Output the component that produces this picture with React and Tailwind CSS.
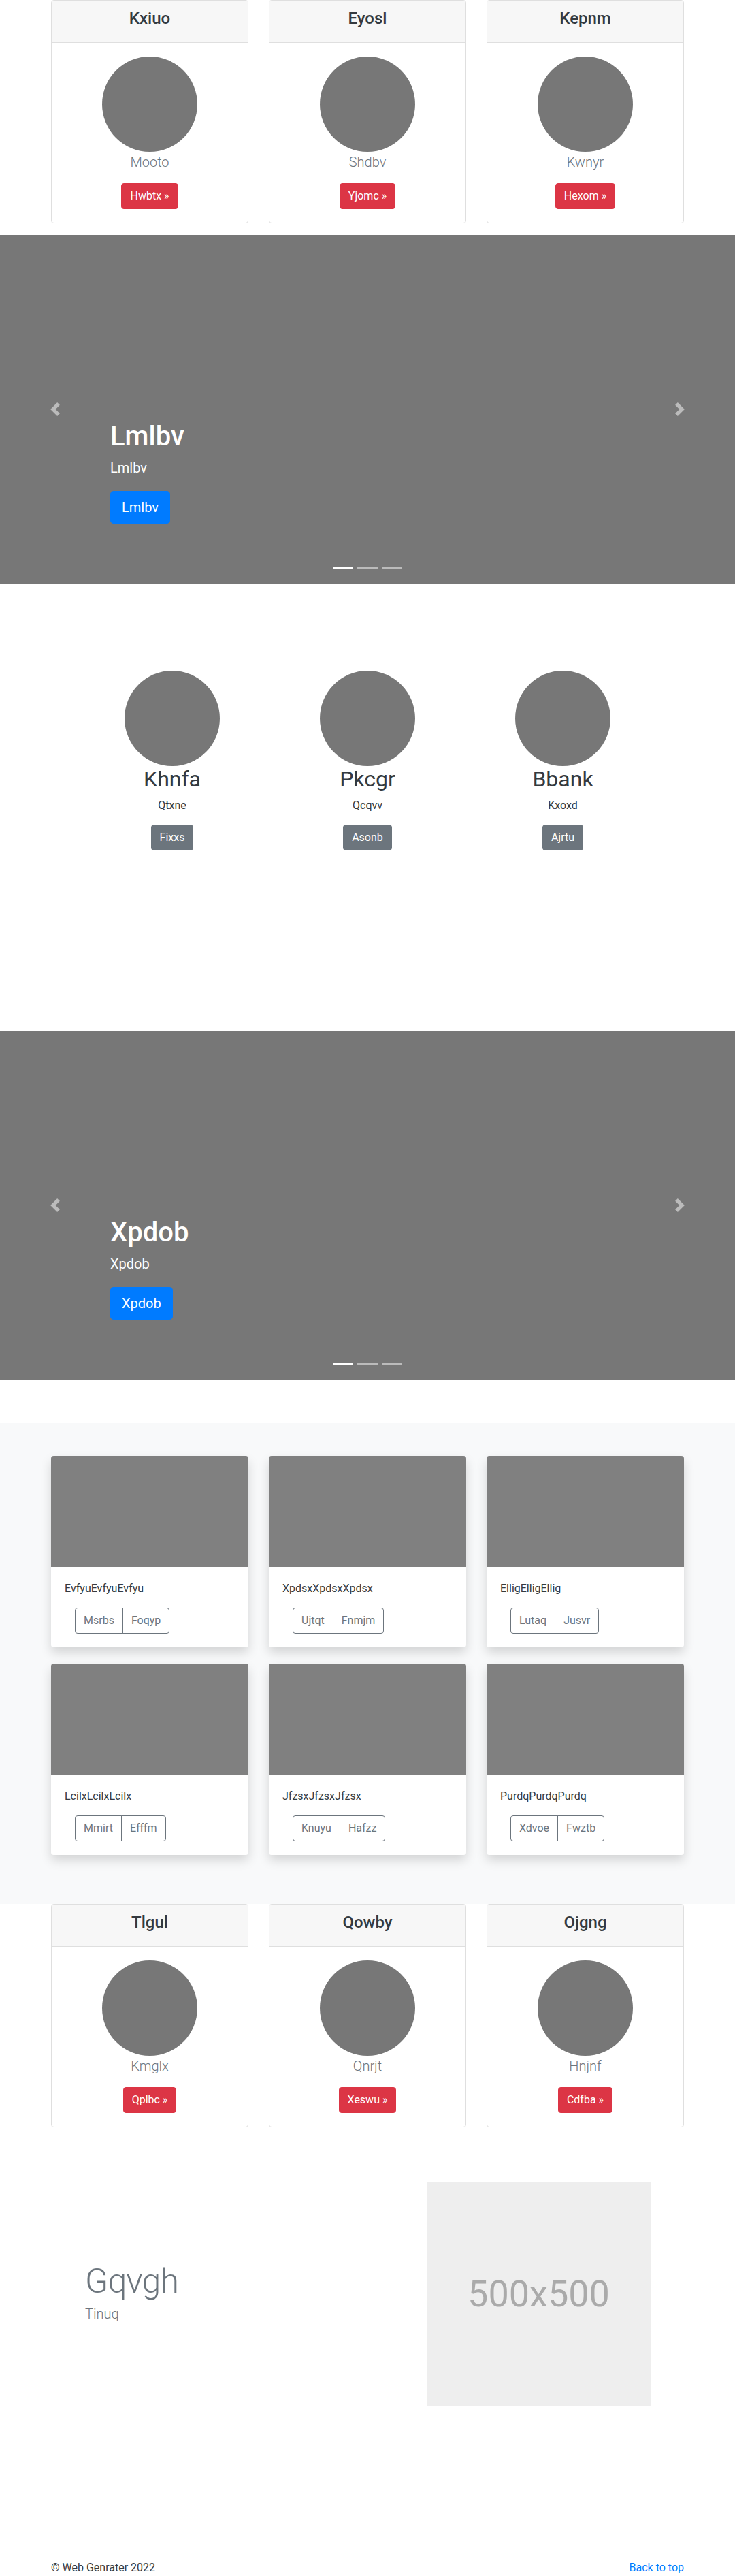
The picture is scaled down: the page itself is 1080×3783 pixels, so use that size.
import React from "react";

const FONT = "font-['Segoe_UI',Roboto,'Helvetica_Neue',Arial,sans-serif]";

const pricingTop = [
  { title: "Kxiuo", name: "Mooto", cta: "Hwbtx" },
  { title: "Eyosl", name: "Shdbv", cta: "Yjomc" },
  { title: "Kepnm", name: "Kwnyr", cta: "Hexom" },
];

const pricingBottom = [
  { title: "Tlgul", name: "Kmglx", cta: "Qplbc" },
  { title: "Qowby", name: "Qnrjt", cta: "Xeswu" },
  { title: "Ojgng", name: "Hnjnf", cta: "Cdfba" },
];

const marketing = [
  { title: "Khnfa", text: "Qtxne", cta: "Fixxs" },
  { title: "Pkcgr", text: "Qcqvv", cta: "Asonb" },
  { title: "Bbank", text: "Kxoxd", cta: "Ajrtu" },
];

const album = [
  { text: "EvfyuEvfyuEvfyu", a: "Msrbs", b: "Foqyp" },
  { text: "XpdsxXpdsxXpdsx", a: "Ujtqt", b: "Fnmjm" },
  { text: "ElligElligEllig", a: "Lutaq", b: "Jusvr" },
  { text: "LcilxLcilxLcilx", a: "Mmirt", b: "Efffm" },
  { text: "JfzsxJfzsxJfzsx", a: "Knuyu", b: "Hafzz" },
  { text: "PurdqPurdqPurdq", a: "Xdvoe", b: "Fwztb" },
];

function PricingRow({ items }) {
  return (
    <div className="w-[960px] mx-auto px-[15px] grid grid-cols-3 gap-x-[30px]">
      {items.map((it) => (
        <div
          key={it.title}
          className="border border-[#dfdfdf] rounded bg-white text-center overflow-hidden"
        >
          <div className="bg-[#f7f7f7] border-b border-[#dfdfdf] px-5 pt-3 pb-3">
            <h4 className="text-2xl leading-[1.2] font-medium text-[#343a40] mb-2">
              {it.title}
            </h4>
          </div>
          <div className="p-5 flex flex-col items-center">
            <div className="w-[140px] h-[140px] rounded-full bg-[#777]" />
            <p className="text-xl leading-[1.5] font-light text-[#6c757d] mb-4">
              {it.name}
            </p>
            <a className="inline-block bg-[#dc3545] border border-[#dc3545] text-white text-base leading-6 px-3 py-1.5 rounded">
              {it.cta} »
            </a>
          </div>
        </div>
      ))}
    </div>
  );
}

function Chevron({ dir }) {
  const d =
    dir === "prev"
      ? "M5.25 0l-4 4 4 4 1.5-1.5L4.25 4l2.5-2.5L5.25 0z"
      : "M2.75 0l-1.5 1.5L3.75 4l-2.5 2.5L2.75 8l4-4-4-4z";
  return (
    <svg viewBox="0 0 8 8" className="w-5 h-5" fill="#fff">
      <path d={d} />
    </svg>
  );
}

function Carousel({ label }) {
  return (
    <div className="relative h-[512px] bg-[#777] overflow-hidden">
      <div className="absolute left-0 top-0 bottom-0 w-[15%] flex items-center justify-center opacity-50">
        <Chevron dir="prev" />
      </div>
      <div className="absolute right-0 top-0 bottom-0 w-[15%] flex items-center justify-center opacity-50">
        <Chevron dir="next" />
      </div>
      <div className="absolute left-[15%] right-[15%] bottom-12 py-5 text-white">
        <h1 className="text-[40px] leading-[1.2] font-medium mb-2">{label}</h1>
        <p className="text-xl leading-[1.4] mb-5">{label}</p>
        <p className="mb-5">
          <a className="inline-block bg-[#007bff] border border-[#007bff] text-white text-xl leading-[1.5] px-4 py-2 rounded-[0.3rem]">
            {label}
          </a>
        </p>
      </div>
      <div className="absolute left-0 right-0 bottom-[22px] flex justify-center gap-[6px]">
        <span className="w-[30px] h-[3px] bg-white" />
        <span className="w-[30px] h-[3px] bg-white opacity-50" />
        <span className="w-[30px] h-[3px] bg-white opacity-50" />
      </div>
    </div>
  );
}

export default function App() {
  return (
    <div className={`${FONT} bg-white text-[#212529] text-base`}>
      {/* top pricing cards */}
      <PricingRow items={pricingTop} />

      <div className="mt-[17px] mb-16">
        <Carousel label="Lmlbv" />
      </div>

      {/* marketing */}
      <div className="w-[861px] mx-auto pt-16 grid grid-cols-3 text-center">
        {marketing.map((m) => (
          <div key={m.title} className="flex flex-col items-center">
            <div className="w-[140px] h-[140px] rounded-full bg-[#777]" />
            <h2 className="text-[32px] leading-[1.2] font-normal text-[#343a40] mb-2">
              {m.title}
            </h2>
            <p className="leading-6 mb-4 text-[#343a40]">{m.text}</p>
            <a className="inline-block bg-[#6c757d] border border-[#6c757d] text-white leading-6 px-3 py-1.5 rounded">
              {m.cta}
            </a>
          </div>
        ))}
      </div>

      <hr className="mt-[184px] border-0 border-t border-[#e6e6e6]" />

      <div className="mt-20 mb-16">
        <Carousel label="Xpdob" />
      </div>

      {/* album */}
      <div className="bg-[#f8f9fa] pt-12 pb-[72px]">
        <div className="w-[960px] mx-auto px-[15px] grid grid-cols-3 gap-x-[30px] gap-y-6">
          {album.map((c) => (
            <div
              key={c.text}
              className="bg-white rounded overflow-hidden shadow-[0_8px_16px_rgba(0,0,0,0.15)]"
            >
              <div className="h-[163px] bg-[#808080]" />
              <div className="p-5">
                <p className="leading-6 mb-4 text-[#343a40]">{c.text}</p>
                <div className="ml-[15px] inline-flex">
                  <a className="border border-[#6c757d] text-[#6c757d] leading-6 px-3 py-1.5 rounded-l">
                    {c.a}
                  </a>
                  <a className="-ml-px border border-[#6c757d] text-[#6c757d] leading-6 px-3 py-1.5 rounded-r">
                    {c.b}
                  </a>
                </div>
              </div>
            </div>
          ))}
        </div>
      </div>

      {/* bottom pricing cards */}
      <PricingRow items={pricingBottom} />

      {/* featurette */}
      <div className="w-[960px] mx-auto mt-[81px] flex items-center">
        <div className="w-[567px] pl-[65px]">
          <h2 className="text-[50px] leading-none font-light tracking-[-0.05rem] text-[#6c757d] mb-2">
            Gqvgh
          </h2>
          <p className="text-xl leading-[1.5] font-light text-[#6c757d]">Tinuq</p>
        </div>
        <div className="w-[329px] h-[328px] bg-[#eee] flex items-center justify-center">
          <span className="text-[54px] text-[#aaa]">500x500</span>
        </div>
      </div>

      <hr className="mt-[145px] border-0 border-t border-[#e6e6e6]" />

      <footer className="w-[930px] mx-auto pt-20 flex justify-between leading-6">
        <p className="text-[#343a40]">© Web Genrater 2022</p>
        <a className="text-[#007bff]">Back to top</a>
      </footer>
    </div>
  );
}
